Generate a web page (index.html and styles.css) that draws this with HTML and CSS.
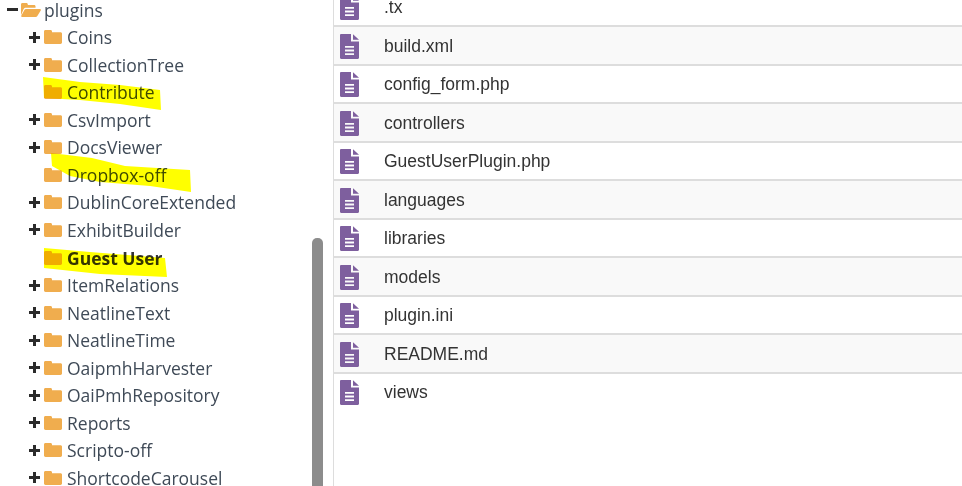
FILE: index.html
```html
<!DOCTYPE html>
<html lang="en">
<head>
<meta charset="utf-8">
<title>plugins</title>
<link rel="stylesheet" href="styles.css">
</head>
<body>
<svg width="0" height="0" class="defs">
  <symbol id="folder" viewBox="0 0 18 15" preserveAspectRatio="none"><path d="M1.5 0H6.5C7.3 0 8 .7 8 1.5V2.4H16.5C17.3 2.4 18 3.1 18 3.9V13.5C18 14.3 17.3 15 16.5 15H1.5C.7 15 0 14.3 0 13.5V1.5C0 .7.7 0 1.5 0Z"/></symbol>
  <symbol id="folder-open" viewBox="0 0 22 15" preserveAspectRatio="none"><path d="M0 13V1.5C0 .7.7 0 1.5 0H6C6.8 0 7.5.7 7.5 1.5V2.2H14.5C15.3 2.2 16 2.9 16 3.7V5.2H5.2C4.2 5.2 3.4 5.7 2.9 6.5Z"/><path d="M5.4 6.4H20.7C21.6 6.4 22.2 7.3 21.7 8.1L18 14C17.6 14.6 16.9 15 16.2 15H1.3C.5 15 0 14.1 .4 13.4L3.9 7.2C4.2 6.7 4.8 6.4 5.4 6.4Z"/></symbol>
  <symbol id="file" viewBox="0 0 19 25"><path d="M1.2 0H11V7.5H19V23.8C19 24.5 18.5 25 17.8 25H1.2C.5 25 0 24.5 0 23.8V1.2C0 .5.5 0 1.2 0ZM13 .3L19 5.7H13ZM5 12V13.8H14V12ZM5 15.6V17.4H14V15.6ZM5 19.2V21H14V19.2Z" fill-rule="evenodd"/></symbol>
</svg>
<main class="page">
  <nav class="tree">
    <div class="row root"><span class="toggle minus"></span><svg class="icon open"><use href="#folder-open"/></svg><span>plugins</span></div>
    <div class="row"><span class="toggle plus"></span><svg class="icon"><use href="#folder"/></svg><span>Coins</span></div>
    <div class="row"><span class="toggle plus"></span><svg class="icon"><use href="#folder"/></svg><span>CollectionTree</span></div>
    <div class="row"><span class="toggle"></span><svg class="icon"><use href="#folder"/></svg><span>Contribute</span></div>
    <div class="row"><span class="toggle plus"></span><svg class="icon"><use href="#folder"/></svg><span>CsvImport</span></div>
    <div class="row"><span class="toggle plus"></span><svg class="icon"><use href="#folder"/></svg><span>DocsViewer</span></div>
    <div class="row"><span class="toggle"></span><svg class="icon"><use href="#folder"/></svg><span>Dropbox-off</span></div>
    <div class="row"><span class="toggle plus"></span><svg class="icon"><use href="#folder"/></svg><span>DublinCoreExtended</span></div>
    <div class="row"><span class="toggle plus"></span><svg class="icon"><use href="#folder"/></svg><span>ExhibitBuilder</span></div>
    <div class="row current"><span class="toggle"></span><svg class="icon"><use href="#folder"/></svg><span>Guest User</span></div>
    <div class="row"><span class="toggle plus"></span><svg class="icon"><use href="#folder"/></svg><span>ItemRelations</span></div>
    <div class="row"><span class="toggle plus"></span><svg class="icon"><use href="#folder"/></svg><span>NeatlineText</span></div>
    <div class="row"><span class="toggle plus"></span><svg class="icon"><use href="#folder"/></svg><span>NeatlineTime</span></div>
    <div class="row"><span class="toggle plus"></span><svg class="icon"><use href="#folder"/></svg><span>OaipmhHarvester</span></div>
    <div class="row"><span class="toggle plus"></span><svg class="icon"><use href="#folder"/></svg><span>OaiPmhRepository</span></div>
    <div class="row"><span class="toggle plus"></span><svg class="icon"><use href="#folder"/></svg><span>Reports</span></div>
    <div class="row"><span class="toggle plus"></span><svg class="icon"><use href="#folder"/></svg><span>Scripto-off</span></div>
    <div class="row"><span class="toggle plus"></span><svg class="icon"><use href="#folder"/></svg><span>ShortcodeCarousel</span></div>
    <svg class="marker" width="333" height="486" viewBox="0 0 333 486">
      <polygon points="43,77 80,82 120,85 160,90 161,110 120,104 80,100 44,98"/>
      <polygon points="51,153 92,158 125,166 190,170 191,192 150,186 100,182 70,176 52,166"/>
      <polygon points="44,248 90,252 165,258 167,277 100,274 44,268"/>
    </svg>
    <div class="scrollbar"></div>
  </nav>
  <section class="files">
    <div class="file"><svg class="doc"><use href="#file"/></svg><span>.tx</span></div>
    <div class="file"><svg class="doc"><use href="#file"/></svg><span>build.xml</span></div>
    <div class="file"><svg class="doc"><use href="#file"/></svg><span>config_form.php</span></div>
    <div class="file"><svg class="doc"><use href="#file"/></svg><span>controllers</span></div>
    <div class="file"><svg class="doc"><use href="#file"/></svg><span>GuestUserPlugin.php</span></div>
    <div class="file"><svg class="doc"><use href="#file"/></svg><span>languages</span></div>
    <div class="file"><svg class="doc"><use href="#file"/></svg><span>libraries</span></div>
    <div class="file"><svg class="doc"><use href="#file"/></svg><span>models</span></div>
    <div class="file"><svg class="doc"><use href="#file"/></svg><span>plugin.ini</span></div>
    <div class="file"><svg class="doc"><use href="#file"/></svg><span>README.md</span></div>
    <div class="file"><svg class="doc"><use href="#file"/></svg><span>views</span></div>
  </section>
</main>
</body>
</html>
```

FILE: styles.css
```css
* { box-sizing: border-box; }
html, body { margin: 0; height: 100%; overflow: hidden; background: #fff; }
.defs { position: absolute; }
.page { display: flex; width: 962px; height: 486px; overflow: hidden; }
.tree {
  position: relative;
  flex: 0 0 333px;
  height: 486px;
  overflow: hidden;
  font-family: "Open Sans", sans-serif;
  font-size: 17.5px;
  color: #3f4a57;
}
.row {
  display: flex;
  align-items: center;
  height: 27.55px;
  padding-left: 29px;
  white-space: nowrap;
}
.row.root { padding-left: 7px; margin-top: -4.17px; }
.row.current { font-weight: 700; color: #333; }
.toggle { position: relative; flex: 0 0 9px; height: 11px; margin-right: 6px; }
.toggle.plus { flex-basis: 11px; margin-right: 4px; }
.toggle.minus { flex-basis: 11px; margin-right: 3px; }
.toggle::before {
  content: "";
  position: absolute;
  left: 0; right: 0; top: 4px;
  height: 3px;
  background: #2b2b2b;
}
.toggle:not(.plus):not(.minus)::before { display: none; }
.toggle.plus::after {
  content: "";
  position: absolute;
  left: 4px; top: 0;
  width: 3px; height: 11px;
  background: #2b2b2b;
}
.icon { flex: 0 0 18px; width: 18px; height: 14px; margin-right: 5px; fill: #f0ad4e; }
.icon.open { flex-basis: 20px; width: 20px; margin-right: 3px; }
.marker { position: absolute; left: 0; top: 0; mix-blend-mode: multiply; fill: #ffff00; pointer-events: none; }
.scrollbar { position: absolute; left: 312px; top: 238px; width: 11px; height: 260px; background: #8c8c8c; border-radius: 5px 5px 0 0; }
.files {
  flex: 1;
  height: 500px;
  margin-top: -11.5px;
  border-left: 1px solid #ddd;
  font-family: "Liberation Sans", sans-serif;
  font-size: 17.5px;
  color: #333;
}
.file {
  display: flex;
  align-items: center;
  height: 38.5px;
  padding: 2px 0 0 6px;
  border-bottom: 2px solid #ddd;
}
.file:nth-child(even) { background: #f9f9f9; }
.file:last-child { border-bottom-color: transparent; }
.doc { flex: 0 0 19px; width: 19px; height: 25px; margin-right: 25px; fill: #7e5f9e; }
```
